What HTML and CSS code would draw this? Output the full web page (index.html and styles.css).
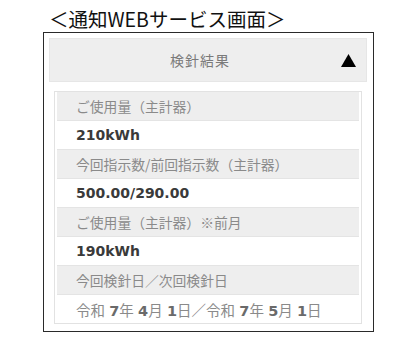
FILE: index.html
```html
<!DOCTYPE html>
<html lang="ja">
<head>
<meta charset="utf-8">
<link rel="stylesheet" href="styles.css">
</head>
<body>
<div class="title">＜通知WEBサービス画面＞</div>
<div class="box">
  <div class="header">
    <span class="header-text">検針結果</span>
    <svg class="tri" width="15" height="13" viewBox="0 0 15 13"><polygon points="7.5,0 15,13 0,13" fill="#000"/></svg>
  </div>
  <div class="rows">
    <div class="row label">ご使用量（主計器）</div>
    <div class="row value">210kWh</div>
    <div class="row label">今回指示数/前回指示数（主計器）</div>
    <div class="row value">500.00/290.00</div>
    <div class="row label">ご使用量（主計器）※前月</div>
    <div class="row value">190kWh</div>
    <div class="row label">今回検針日／次回検針日</div>
    <div class="row date"><span>令和 <b>7</b>年 <b>4</b>月 <b>1</b>日／令和 <b>7</b>年 <b>5</b>月 <b>1</b>日</span></div>
  </div>
</div>
</body>
</html>
```
FILE: styles.css
```css
html, body {
  margin: 0;
  padding: 0;
  background: #fff;
}
body {
  width: 403px;
  height: 343px;
  font-family: "Noto Sans CJK JP", sans-serif;
}
.title {
  margin-left: 49px;
  height: 32px;
  font-size: 19.5px;
  line-height: 37px;
  color: #111;
  white-space: nowrap;
}
.box {
  margin-left: 43px;
  width: 331px;
  box-sizing: border-box;
  border: 1px solid #2a2a2a;
  padding: 5px 6px 7px 5px;
}
.header {
  height: 44px;
  box-sizing: border-box;
  background: #eeeeee;
  border: 1px solid #e6e6e6;
  display: flex;
  align-items: center;
  position: relative;
}
.header-text {
  flex: 1;
  text-align: center;
  padding-right: 16px;
  font-size: 14px;
  letter-spacing: 1px;
  color: #7a7a7a;
}
.tri {
  position: absolute;
  right: 10px;
  top: 15px;
}
.rows {
  margin: 9px 5px 0 5px;
  border: 1px solid #e2e2e2;
  padding: 0 2px;
}
.row {
  height: 29px;
  box-sizing: border-box;
  border-bottom: 1px solid #e4e4e4;
  display: flex;
  align-items: center;
  padding-left: 19px;
  white-space: nowrap;
}
.row:last-child {
  border-bottom: none;
  height: 28px;
}
.label {
  background: #eeeeee;
  font-size: 13.8px;
  color: #8a8a8a;
}
.value {
  background: #fff;
  font-family: "DejaVu Sans", sans-serif;
  font-weight: 600;
  font-size: 14px;
  color: #3a3a3a;
}
.date {
  background: #fff;
  font-size: 14.5px;
  word-spacing: 1px;
  color: #8a8a8a;
}
.date b {
  font-family: "DejaVu Sans", sans-serif;
  font-weight: bold;
  font-size: 14.5px;
  color: #6a6a6a;
}
```
